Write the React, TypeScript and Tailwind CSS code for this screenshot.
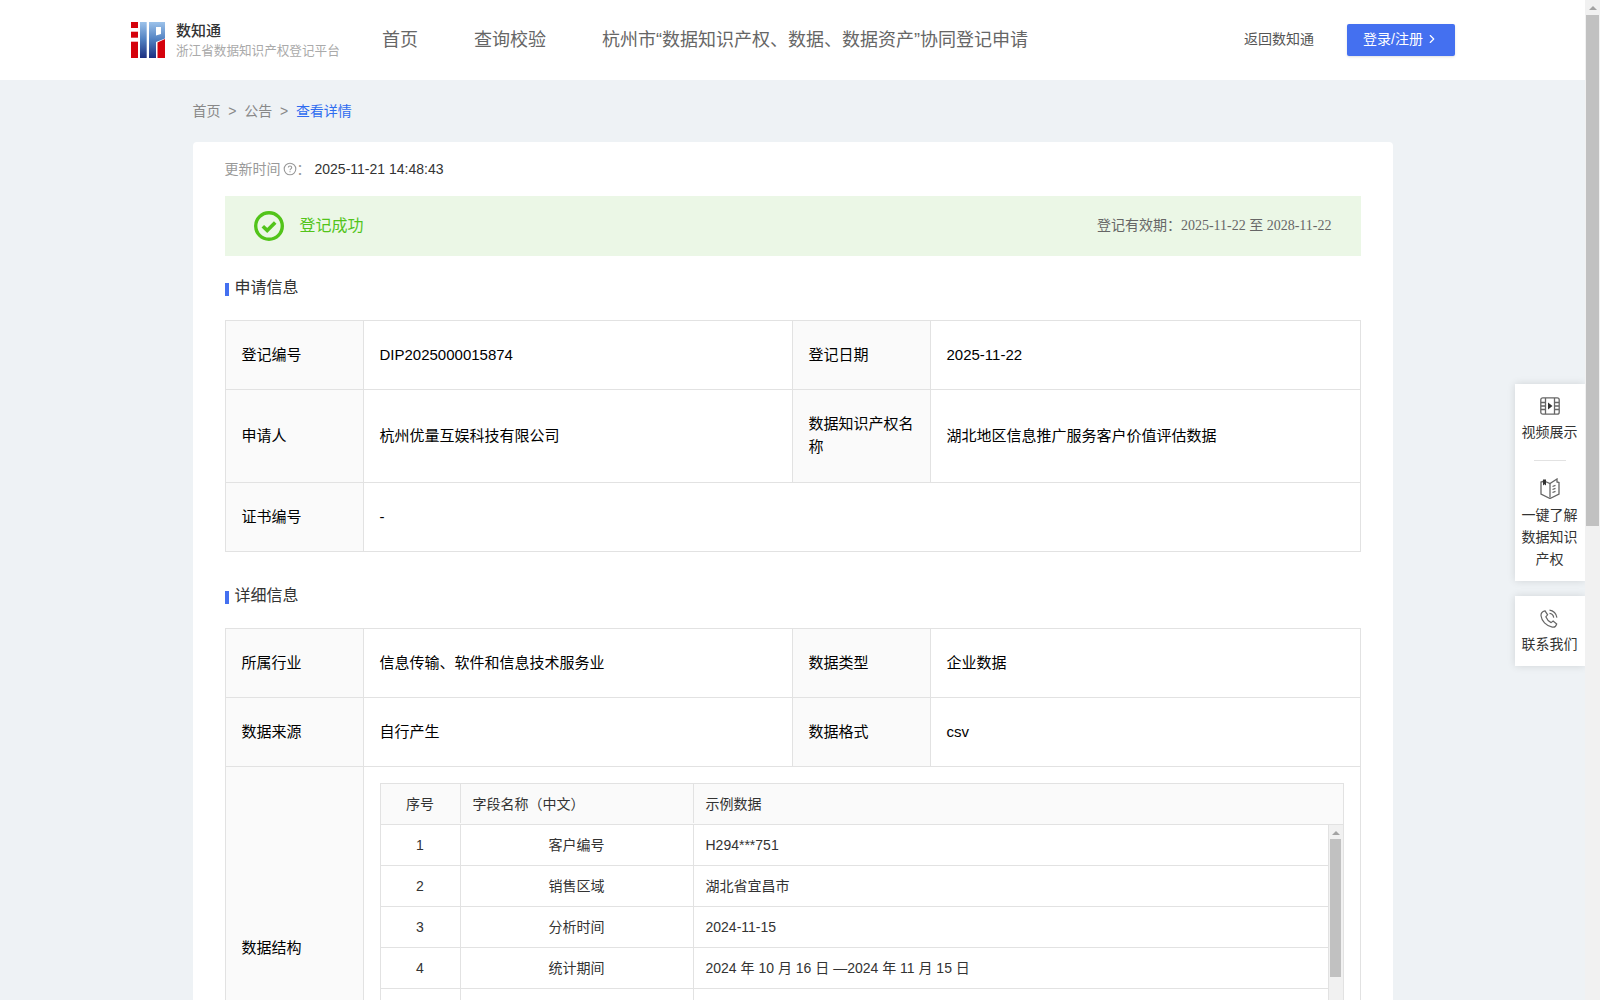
import { ChevronRight } from 'lucide-react';

const cjk = "font-['Liberation_Sans','Noto_Sans_CJK_SC',sans-serif]";

const Logo = () => (
  <svg width="34" height="36" viewBox="0 0 34 36" className="shrink-0">
    <defs>
      <linearGradient id="logoBlue" x1="0" y1="0" x2="0" y2="1">
        <stop offset="0" stopColor="#9cc2ea" />
        <stop offset="0.5" stopColor="#4f7fc0" />
        <stop offset="1" stopColor="#1c2f80" />
      </linearGradient>
    </defs>
    <rect x="0" y="0" width="7" height="6" fill="#d5020c" />
    <rect x="0" y="9.7" width="7" height="6" fill="#d5020c" />
    <rect x="0" y="19.7" width="7" height="16.3" fill="#d5020c" />
    <rect x="9" y="0" width="6.7" height="36" fill="url(#logoBlue)" />
    <path fillRule="evenodd" d="M18 0H34V16.5L25 20V36H18ZM25 5V13.5L30 12V5Z" fill="url(#logoBlue)" />
    <path d="M26.5 20.5L34 17V36H26.5Z" fill="#d5020c" />
  </svg>
);

const VideoIcon = () => (
  <svg width="20" height="18" viewBox="0 0 20 18" fill="none" stroke="#666" strokeWidth="1.3">
    <rect x="0.8" y="0.8" width="18.4" height="16.4" rx="2" />
    <path d="M5.5 1v16M14.5 1v16M1 5.5h4.5M1 9h4.5M1 12.5h4.5M14.5 5.5h4.5M14.5 9h4.5M14.5 12.5h4.5" />
    <path d="M8 5.5l4.5 3.5-4.5 3.5z" fill="#333" stroke="none" />
  </svg>
);

const BookIcon = () => (
  <svg width="20" height="21" viewBox="0 0 20 21" fill="none" stroke="#666" strokeWidth="1.3">
    <path d="M3 2.5l7 3 7-4.5v3l2 .5v11.5l-9 4.5-9-4.5V4l2-.5" />
    <path d="M10 5.5v14" />
    <path d="M3 1.5h3v6l-1.5-1.2L3 7.5z" fill="#333" stroke="none" />
    <path d="M12.5 8.5l3-1.2M12.5 11.5l3-1.2M12.5 14.5l3-1.2" />
  </svg>
);

const PhoneIcon = () => (
  <svg width="19" height="20" viewBox="0 0 19 20" fill="none" stroke="#666" strokeWidth="1.2">
    <path d="M5 1.8l2.6 4-1.8 2c1 2.5 2.8 4.6 5.3 5.8l2-1.6 3.6 3c-.6 2-2.3 3.6-4.4 3.1C6 16.8 1.6 11.8 1 6.8.8 4.2 2.8 2.3 5 1.8z" />
    <path d="M9.5 1.2c3.8.3 7 3.4 7.4 7.4M9.5 4.4c2.1.2 3.9 1.9 4.2 4.2" />
  </svg>
);

const Label = ({ children, className = '' }: { children: React.ReactNode; className?: string }) => (
  <div className={`shrink-0 flex items-center bg-[#fafafa] px-4 pb-[2px] text-[15px] leading-[23px] text-black ${className}`}>
    {children}
  </div>
);

const Value = ({ children, className = '' }: { children: React.ReactNode; className?: string }) => (
  <div className={`min-w-0 flex items-center border-l border-[#e2e2e2] px-4 text-[15px] text-black ${className}`}>
    {children}
  </div>
);

const Row = ({ a, b, c, d, h }: { a: string; b: string; c: string; d: string; h: string }) => (
  <div className={`flex border-b border-[#e2e2e2] ${h}`}>
    <Label className="w-[137px]">{a}</Label>
    <Value className="w-[429px]">{b}</Value>
    <Label className="w-[138px] border-l border-[#e2e2e2]">{c}</Label>
    <Value className="flex-1">{d}</Value>
  </div>
);

const Section = ({ title }: { title: string }) => (
  <div className="flex items-center h-5 text-base text-[#333]">
    <span className="w-1 h-[13px] bg-[#4470f0] mr-[6px] mt-0.5" />
    {title}
  </div>
);

const fields = [
  { n: '1', name: '客户编号', sample: 'H294***751' },
  { n: '2', name: '销售区域', sample: '湖北省宜昌市' },
  { n: '3', name: '分析时间', sample: '2024-11-15' },
  { n: '4', name: '统计期间', sample: '2024 年 10 月 16 日 —2024 年 11 月 15 日' },
  { n: '', name: '', sample: '' },
];

const FieldTable = () => (
  <div className="border border-[#e2e2e2] text-sm text-[#333]">
    <div className="flex h-[41px] border-b border-[#e2e2e2] bg-[#fafafa] pb-[1px]">
      <div className="w-[80px] flex items-center justify-center border-r border-[#e2e2e2]">序号</div>
      <div className="w-[233px] flex items-center pl-3 border-r border-[#e2e2e2]">字段名称（中文）</div>
      <div className="flex-1 flex items-center pl-3">示例数据</div>
    </div>
    <div className="flex h-[288px] overflow-hidden">
      <div className="flex-1 min-w-0">
        {fields.map((f, i) => (
          <div key={i} className="flex h-[41px] border-b border-[#e2e2e2]">
            <div className="w-[80px] flex items-center justify-center border-r border-[#e2e2e2]">{f.n}</div>
            <div className="w-[233px] flex items-center justify-center border-r border-[#e2e2e2]">{f.name}</div>
            <div className="flex-1 flex items-center pl-3">{f.sample}</div>
          </div>
        ))}
      </div>
      <div className="w-[15px] shrink-0 bg-[#f1f1f1] border-l border-[#e2e2e2] flex flex-col items-center pt-[6px]">
        <span className="w-0 h-0 border-x-[4px] border-x-transparent border-b-[4px] border-b-[#a3a3a3]" />
        <span className="w-[11px] h-[138px] bg-[#c1c1c1] mt-[4px]" />
      </div>
    </div>
  </div>
);

export default function App() {
  return (
    <div className={`flex h-screen overflow-hidden bg-[#eef2f5] ${cjk}`}>
      <div className="flex-1 min-w-0 overflow-hidden relative">
        <header className="h-20 bg-white flex items-center pl-[131px] pr-[130px]">
          <Logo />
          <div className="ml-[11px] w-[198px] shrink-0 pt-[2px]">
            <div className="text-[15px] leading-5 text-[#333] font-medium">数知通</div>
            <div className="text-[12.6px] leading-5 text-[#aaa] whitespace-nowrap">浙江省数据知识产权登记平台</div>
          </div>
          <nav className="ml-2 flex gap-14 text-lg text-[#666] whitespace-nowrap">
            <span>首页</span>
            <span>查询校验</span>
            <span>杭州市“数据知识产权、数据、数据资产”协同登记申请</span>
          </nav>
          <span className="ml-auto pb-[2px] text-sm text-[#555] whitespace-nowrap">返回数知通</span>
          <button className="ml-[33px] w-[108px] h-8 rounded-[2px] bg-[#4470f0] text-white text-sm flex items-center justify-center gap-[2px] pb-[2px] shadow-sm whitespace-nowrap">
            登录/注册
            <ChevronRight size={14} />
          </button>
        </header>

        <main className="w-[1200px] mx-auto">
          <div className="h-[62px] flex items-center gap-[7.75px] text-sm text-[#888]">
            <span>首页</span>
            <span>&gt;</span>
            <span>公告</span>
            <span>&gt;</span>
            <span className="text-[#2f6cf0]">查看详情</span>
          </div>
          <div className="bg-white rounded-t px-8 pt-[17px]">
            <div className="flex items-center h-5 text-sm">
              <span className="text-[#999]">更新时间</span>
              <svg width="14" height="14" viewBox="0 0 14 14" fill="none" stroke="#999" strokeWidth="1.1" className="ml-[2px]">
                <circle cx="7" cy="7" r="5.8" />
                <path d="M5.3 5.6c0-1 .8-1.6 1.7-1.6s1.7.6 1.7 1.5c0 1.3-1.7 1.4-1.7 2.7M7 9.3v1" />
              </svg>
              <span className="text-[#999] w-[18px]">：</span>
              <span className="text-[#333]">2025-11-21 14:48:43</span>
            </div>
            <div className="mt-[17px] h-[60px] bg-[#ebf7e6] flex items-center px-[29px]">
              <svg width="30" height="30" viewBox="0 0 30 30" fill="none">
                <circle cx="15" cy="15" r="13.3" stroke="#52c41a" strokeWidth="3.4" />
                <path d="M8.8 15.2l4.4 4.2 8-8" stroke="#52c41a" strokeWidth="3.6" />
              </svg>
              <span className="ml-4 text-base text-[#52c41a]">登记成功</span>
              <span className="ml-auto text-sm text-[#666] font-['Liberation_Serif','Noto_Sans_CJK_SC',serif]">
                登记有效期：2025-11-22 至 2028-11-22
              </span>
            </div>

            <div className="mt-[22px]"><Section title="申请信息" /></div>
            <div className="mt-[22px] border border-b-0 border-[#e2e2e2]">
              <Row h="h-[69px]" a="登记编号" b="DIP2025000015874" c="登记日期" d="2025-11-22" />
              <Row h="h-[93px]" a="申请人" b="杭州优量互娱科技有限公司" c="数据知识产权名称" d="湖北地区信息推广服务客户价值评估数据" />
              <div className="flex h-[69px] border-b border-[#e2e2e2]">
                <Label className="w-[137px]">证书编号</Label>
                <Value className="flex-1">-</Value>
              </div>
            </div>

            <div className="mt-[34px]"><Section title="详细信息" /></div>
            <div className="mt-[22px] border border-[#e2e2e2]">
              <Row h="h-[69px]" a="所属行业" b="信息传输、软件和信息技术服务业" c="数据类型" d="企业数据" />
              <Row h="h-[69px]" a="数据来源" b="自行产生" c="数据格式" d="csv" />
              <div className="flex">
                <Label className="w-[137px]">数据结构</Label>
                <div className="flex-1 min-w-0 border-l border-[#e2e2e2] px-4 py-4">
                  <FieldTable />
                </div>
              </div>
            </div>
          </div>
        </main>

        <aside className="absolute right-0 top-[384px] w-[70px] flex flex-col gap-[15px] text-sm text-[#333] text-center">
          <div className="bg-white shadow-[0_0_8px_rgba(0,0,0,0.12)] pt-[13px] pb-[11px] pr-[1px] flex flex-col items-center">
            <VideoIcon />
            <span className="mt-[6px] leading-[22px]">视频展示</span>
            <span className="w-8 border-t border-[#e2e2e2] mt-[17px] mb-[17px]" />
            <BookIcon />
            <span className="mt-[5px] leading-[22px]">一键了解<br />数据知识<br />产权</span>
          </div>
          <div className="bg-white shadow-[0_0_8px_rgba(0,0,0,0.12)] pt-[13px] pb-[11px] pr-[1px] flex flex-col items-center">
            <PhoneIcon />
            <span className="mt-1 leading-[22px]">联系我们</span>
          </div>
        </aside>
      </div>
      <div className="w-[15px] shrink-0 bg-[#f1f1f1] flex flex-col items-center pt-[6px]">
        <span className="w-0 h-0 border-x-[4px] border-x-transparent border-b-[4px] border-b-[#a3a3a3]" />
        <span className="w-[13px] h-[511px] bg-[#c1c1c1] mt-[5px]" />
      </div>
    </div>
  );
}
